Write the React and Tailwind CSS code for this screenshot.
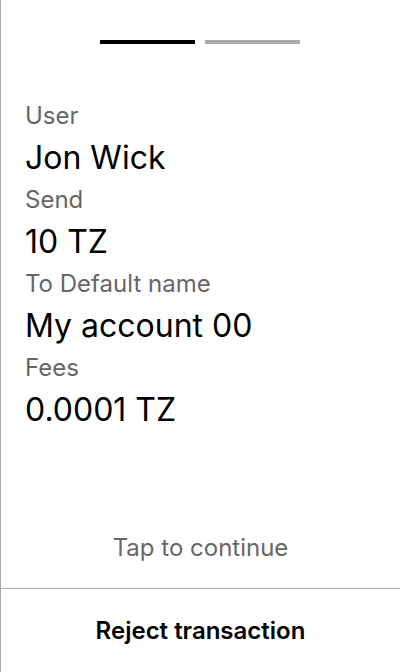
const rows = [
  { label: "User", value: "Jon Wick" },
  { label: "Send", value: "10 TZ" },
  { label: "To Default name", value: "My account 00" },
  { label: "Fees", value: "0.0001 TZ" },
];

export default function App() {
  return (
    <div className="h-[672px] w-[400px] bg-white border-l border-[#aaaaaa] flex flex-col font-['Inter',sans-serif]">
      {/* Progress */}
      <div className="flex justify-center gap-[10px] pt-10 pr-px">
        <div className="w-[95px] h-1 bg-black" />
        <div className="w-[95px] h-1 bg-[#aaaaaa]" />
      </div>

      {/* Details */}
      <div className="flex-1 pl-6 pr-6 pt-[52px]">
        {rows.map((r) => (
          <div key={r.label}>
            <p className="text-[24px] leading-[40px] text-[#666666]">{r.label}</p>
            <p className="text-[32px] leading-[44px] text-black">{r.value}</p>
          </div>
        ))}
      </div>

      <p className="text-center text-[24px] text-[#666666] leading-[40px] mb-5">Tap to continue</p>

      <button className="h-[84px] border-t border-[#aaaaaa] text-[24px] font-semibold text-black">
        Reject transaction
      </button>
    </div>
  );
}
